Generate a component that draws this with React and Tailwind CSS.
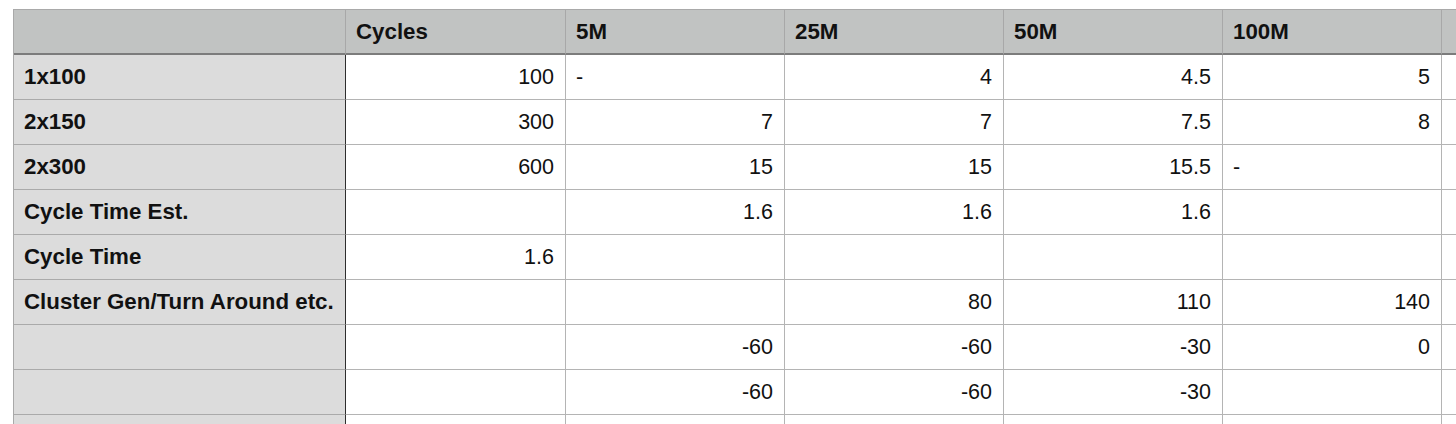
import React from 'react';

const columns = ['Cycles', '5M', '25M', '50M', '100M'];

// each value: string -> right aligned number, { left: '-' } -> left aligned dash
const rows = [
  { label: '1x100', cells: ['100', { left: '-' }, '4', '4.5', '5'] },
  { label: '2x150', cells: ['300', '7', '7', '7.5', '8'] },
  { label: '2x300', cells: ['600', '15', '15', '15.5', { left: '-' }] },
  { label: 'Cycle Time Est.', cells: ['', '1.6', '1.6', '1.6', ''] },
  { label: 'Cycle Time', cells: ['1.6', '', '', '', ''] },
  { label: 'Cluster Gen/Turn Around etc.', cells: ['', '', '80', '110', '140'] },
  { label: '', cells: ['', '-60', '-60', '-30', '0'] },
  { label: '', cells: ['', '-60', '-60', '-30', ''] },
  { label: '', cells: ['', '', '', '', ''] },
];

const grid =
  'grid grid-cols-[332px_220px_219px_219px_219px_219px_120px]';

const Cell = ({ value }) => {
  if (value && typeof value === 'object') {
    return (
      <div className="h-[45px] border-r border-b border-[#b4b4b4] bg-white flex items-center justify-start px-[10px] text-[21.5px] text-[#111]">
        {value.left}
      </div>
    );
  }
  return (
    <div className="h-[45px] border-r border-b border-[#b4b4b4] bg-white flex items-center justify-end pr-[11px] text-[21.5px] text-[#111]">
      {value}
    </div>
  );
};

export default function App() {
  return (
    <div
      className="h-[424px] w-[1456px] overflow-hidden bg-white"
      style={{ fontFamily: '"Liberation Sans", Arial, sans-serif' }}
    >
      <div className="mt-[9px] ml-[13px] w-max border-l border-t border-[#a9a9a9]">
        <div className={`${grid} bg-[#c1c3c2]`}>
          <div className="h-[45px] border-r border-b-2 border-r-[#a8a8a8] border-b-[#7c7c7c]" />
          {columns.map((c) => (
            <div
              key={c}
              className="h-[45px] border-r border-b-2 border-r-[#a8a8a8] border-b-[#7c7c7c] flex items-center pl-[10px] text-[22.3px] font-bold text-[#111]"
            >
              {c}
            </div>
          ))}
          <div className="h-[45px] border-b-2 border-b-[#7c7c7c]" />
        </div>

        {rows.map((r, i) => (
          <div key={i} className={grid}>
            <div className="h-[45px] bg-[#dcdcdc] border-r border-b border-r-[#2e2e2e] border-b-[#aaaaaa] flex items-center pl-[10px] text-[22.3px] font-bold text-[#111] whitespace-nowrap">
              {r.label}
            </div>
            {r.cells.map((v, j) => (
              <Cell key={j} value={v} />
            ))}
            <div className="h-[45px] border-b border-[#b4b4b4] bg-white" />
          </div>
        ))}
      </div>
    </div>
  );
}
